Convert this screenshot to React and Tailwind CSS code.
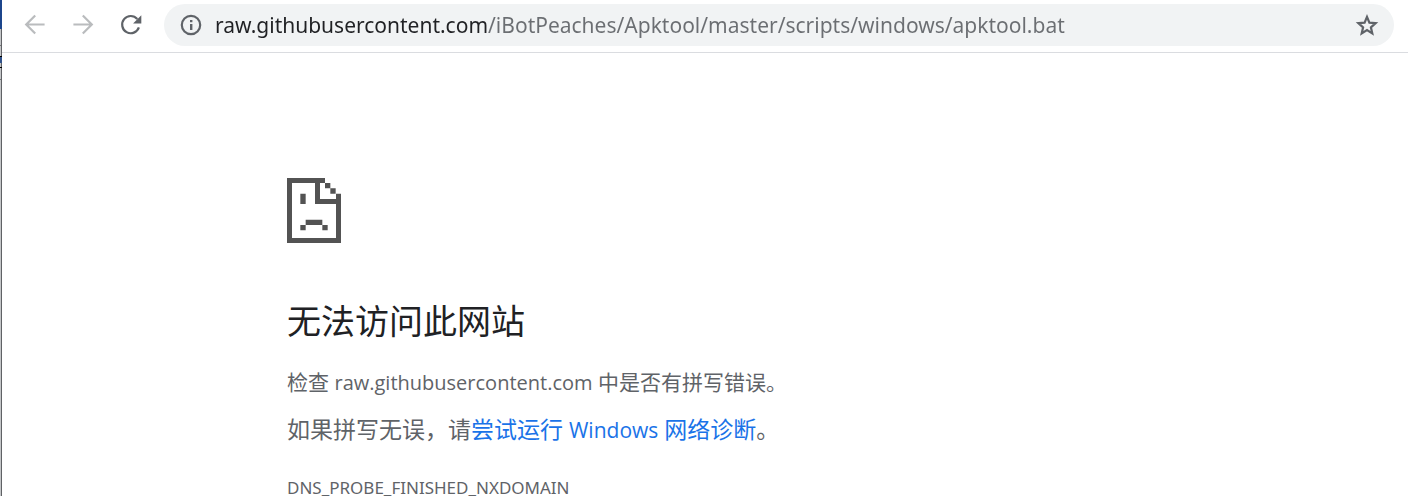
import React, { useState } from "react";

const stroke = { fill: "none", stroke: "currentColor", strokeWidth: 2.2 };

function ArrowIcon({ flip }) {
  return (
    <svg viewBox="0 0 24 24" className="size-6" aria-hidden="true" {...stroke}>
      <path d={flip ? "M2.4 11.5H20.6M11.8 2.5l9 9-9 9" : "M21.6 11.5H3.4M12.2 2.5L3.2 11.5l9 9"} />
    </svg>
  );
}

function ReloadIcon() {
  return (
    <svg viewBox="0 0 24 24" className="size-6" aria-hidden="true">
      <path d="M19.9 14.4A8.6 8.6 0 1 1 18.3 6" {...stroke} />
      <path d="M22.3 2.2V10.4H14.1Z" fill="currentColor" />
    </svg>
  );
}

function InfoIcon() {
  return (
    <svg viewBox="0 0 22 22" className="size-[22px] shrink-0" aria-hidden="true">
      <circle cx="11" cy="11" r="9.2" {...stroke} />
      <path d="M10 10h2.4v6H10zM10 6h2.4v2.2H10z" fill="currentColor" />
    </svg>
  );
}

function StarIcon() {
  return (
    <svg viewBox="0 0 24 24" className="size-6" aria-hidden="true">
      <path
        d="M12 3.9l2.4 5.8 6.2.5-4.7 4.1 1.4 6.1L12 17.1l-5.3 3.3 1.4-6.1-4.7-4.1 6.2-.5z"
        {...stroke}
      />
    </svg>
  );
}

function SadPageIcon() {
  return (
    <svg viewBox="0 0 162 195" className="h-[65px] w-[54px]" fill="#535353" aria-hidden="true">
      <path d="M0 0H114V15H99V63H147V47H162V195H0ZM15 15V180H147V78H84V15Z" fillRule="evenodd" />
      <path d="M99 0h15v15h-15zM114 15h16v16h-16zM130 31h16v16h-16z" />
      <path d="M40 47h16v31h-16zM56 125h50v16h-50zM40 141h16v16h-16zM106 141h16v16h-16z" />
    </svg>
  );
}

const navButton = "flex size-8 items-center justify-center rounded-full";

function Toolbar() {
  const [url, setUrl] = useState("raw.githubusercontent.com/iBotPeaches/Apktool/master/scripts/windows/apktool.bat");
  return (
    <header className="flex h-[53px] items-start border-b border-[#dadce0] pt-1 pr-[14px] pl-[17px]">
      <nav className="flex h-[42px] items-center gap-4 pr-[17px] text-[#babcbe]">
        <button type="button" aria-label="后退" disabled className={navButton}>
          <ArrowIcon />
        </button>
        <button type="button" aria-label="前进" disabled className={navButton}>
          <ArrowIcon flip />
        </button>
        <button type="button" aria-label="重新加载" className={`${navButton} text-[#5f6368]`}>
          <ReloadIcon />
        </button>
      </nav>
      <div className="flex h-[42px] min-w-0 flex-1 items-center gap-[13px] rounded-full bg-[#f1f3f4] pr-[11px] pl-4 text-[#5f6368]">
        <InfoIcon />
        <input
          type="text"
          aria-label="地址"
          value={url}
          onChange={(e) => setUrl(e.target.value)}
          className="h-8 min-w-0 flex-1 bg-[linear-gradient(to_right,#202124_273px,#6b6e72_273px)] bg-clip-text font-['Noto_Sans',sans-serif] text-[21px] text-transparent caret-[#202124] outline-none"
        />
        <button type="button" aria-label="为此标签页添加书签" className={navButton}>
          <StarIcon />
        </button>
      </div>
    </header>
  );
}

export default function App() {
  return (
    <div className="flex h-screen overflow-hidden bg-white">
      <div className="flex w-[2px] shrink-0 flex-col border-r border-[#5f6165] bg-[#c4c6c8]">
        <div className="h-[29px] w-[2px] bg-[#1c458c]" />
        <div className="mt-4 h-px bg-[#777777]" />
        <div className="mt-[10px] h-px w-[2px] bg-black" />
        <div className="h-[6px] w-[2px] bg-[#31528a]" />
        <div className="mt-1 h-px w-[2px] bg-black" />
        <div className="mt-[11px] h-px bg-[#777777]" />
      </div>
      <div className="min-w-0 flex-1">
        <Toolbar />
        <main className="pt-[125px] pl-[285px] font-['Open_Sans','Noto_Sans_CJK_SC',sans-serif] text-[#5f6368]">
          <SadPageIcon />
          <h1 className="mt-[54px] text-[34px] leading-[48px] text-[#202124]">无法访问此网站</h1>
          <p className="mt-[23px] text-[21px] leading-[28px]">
            检查 <span className="text-[20px]">raw.githubusercontent.com</span> 中是否有拼写错误。
          </p>
          <p className="mt-4 text-[23px] leading-[32px]">
            如果拼写无误，请
            <a href="#diagnose" className="text-[#1a73e8]">
              尝试运行 <span className="text-[21px]">Windows</span> 网络诊断
            </a>
            。
          </p>
          <p className="mt-7 font-['Noto_Sans',sans-serif] text-[17px] leading-[28px]">DNS_PROBE_FINISHED_NXDOMAIN</p>
        </main>
      </div>
    </div>
  );
}
